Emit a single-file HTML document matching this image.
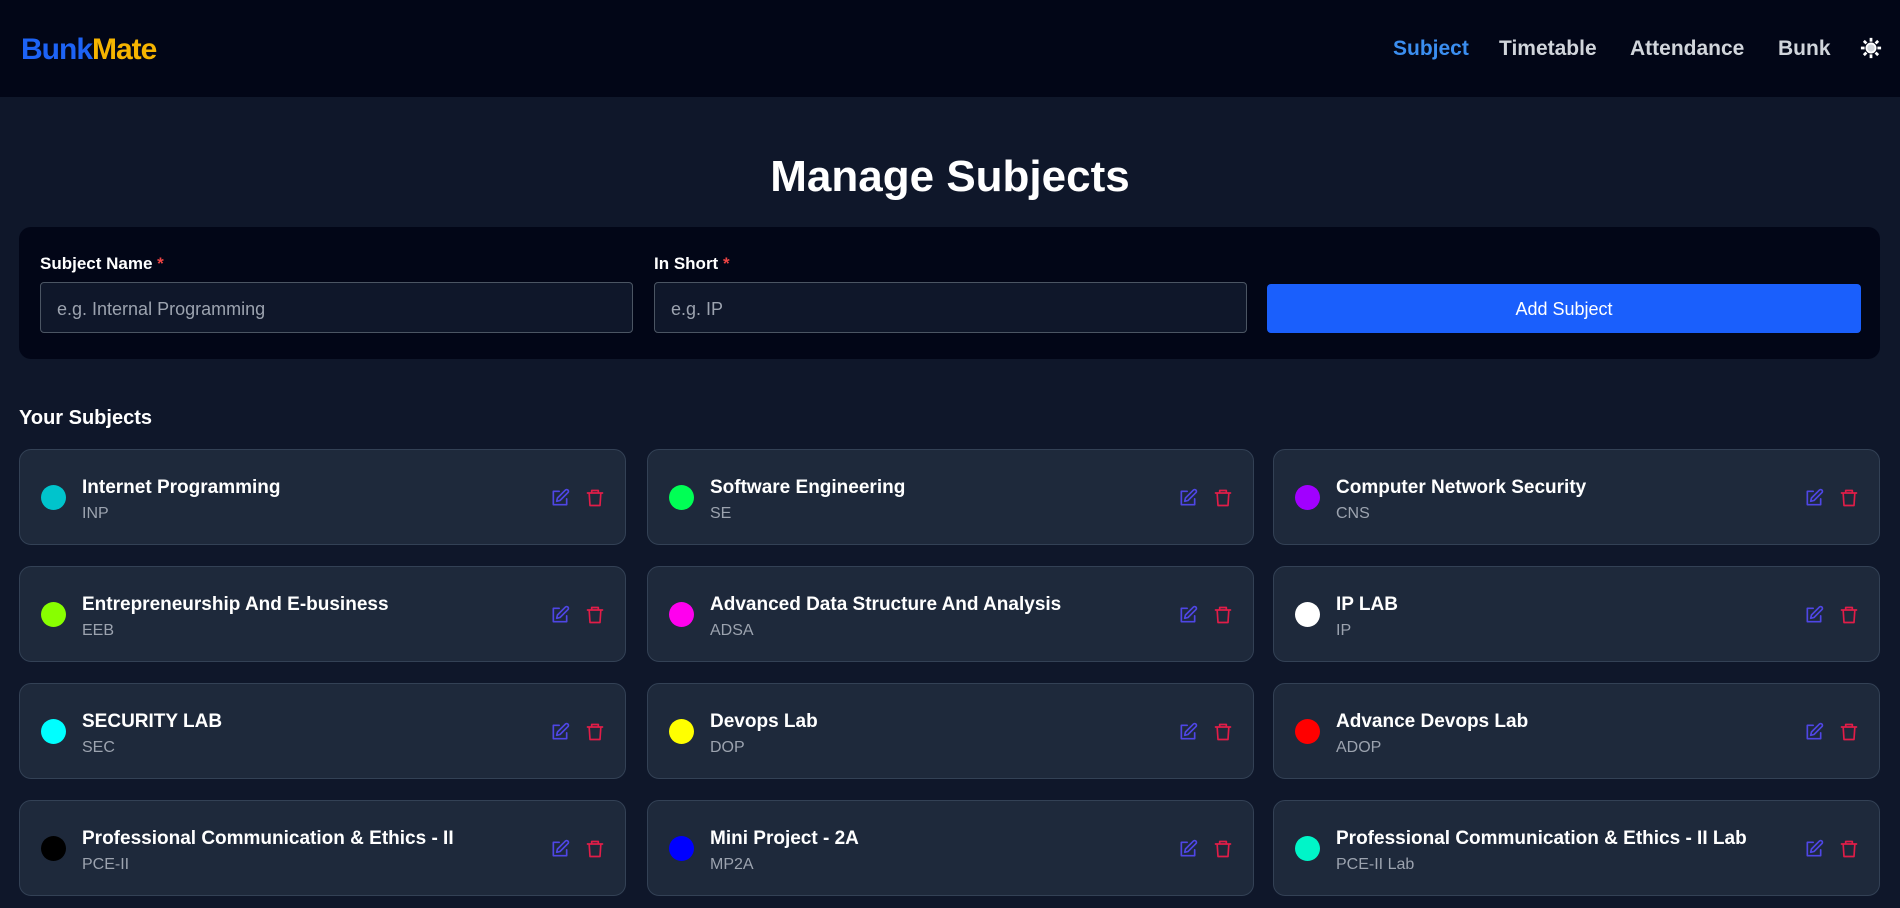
<!DOCTYPE html>
<html><head><meta charset="utf-8"><style>
*{box-sizing:border-box;margin:0;padding:0}
body{width:1900px;height:908px;overflow:hidden;background:#0f172a;font-family:"Liberation Sans",sans-serif;color:#fff}
.nav{height:97px;background:#020617;position:relative}
.logo{position:absolute;left:21px;top:33px;font-size:30px;font-weight:bold;letter-spacing:-1px}
.logo .b{color:#1d63f5}.logo .m{color:#f5b400}
.links{position:absolute;top:37px;font-size:21px;font-weight:bold;color:#d1d5db}
.links span{position:absolute;white-space:nowrap}
h1{position:absolute;top:152px;width:100%;text-align:center;font-size:44px;font-weight:bold}
.panel{position:absolute;left:19px;top:227px;width:1861px;height:132px;background:#020617;border-radius:12px}
.lbl{position:absolute;top:254px;font-size:17px;font-weight:bold}
.lbl i{color:#ef4444;font-style:normal}
.inp{position:absolute;top:282px;height:51px;border:1px solid #4b5563;border-radius:4px;background:#0f172a;color:#9ca3af;font-size:18px;padding:16px 0 0 16px}
.btn{position:absolute;left:1267px;top:284px;width:594px;height:49px;background:#1a5ffc;border-radius:4px;text-align:center;font-size:18px;line-height:51px}
.ys{position:absolute;left:19px;top:407px;font-size:20px;font-weight:bold}
.card{position:absolute;width:607px;height:96px;background:#1e293b;border:1px solid #334155;border-radius:12px}
.dot{position:absolute;left:21px;top:35px;width:25px;height:25px;border-radius:50%}
.t{position:absolute;left:62px;top:27px;font-size:19px;font-weight:bold;white-space:nowrap}
.s{position:absolute;left:62px;top:55px;font-size:16px;color:#9ca3af}
.ic{position:absolute;top:38px}
</style></head><body>
<div class="nav">
<div class="logo"><span class="b">Bunk</span><span class="m">Mate</span></div>
<div class="links">
<span style="left:1393px;color:#3b8ef0">Subject</span>
<span style="left:1499px">Timetable</span>
<span style="left:1630px">Attendance</span>
<span style="left:1778px">Bunk</span>
</div>
<svg style="position:absolute;left:1860px;top:37px" width="22" height="22" viewBox="0 0 24 24"><circle cx="12" cy="12" r="5" fill="#d1d5db" stroke="#fff" stroke-width="2"/><g stroke="#fff" stroke-width="3"><path d="M12 1v4M12 19v4M1 12h4M19 12h4M4.2 4.2l2.8 2.8M17 17l2.8 2.8M4.2 19.8L7 17M17 7l2.8-2.8"/></g></svg>
</div>
<h1>Manage Subjects</h1>
<div class="panel"></div>
<div class="lbl" style="left:40px">Subject Name <i>*</i></div>
<div class="lbl" style="left:654px">In Short <i>*</i></div>
<div class="inp" style="left:40px;width:593px">e.g. Internal Programming</div>
<div class="inp" style="left:654px;width:593px">e.g. IP</div>
<div class="btn">Add Subject</div>
<div class="ys">Your Subjects</div>
<div id="cards"></div>
<script>
var d=[["Internet Programming","INP","#00c4cc"],["Software Engineering","SE","#00ff55"],["Computer Network Security","CNS","#a100ff"],
["Entrepreneurship And E-business","EEB","#88ff00"],["Advanced Data Structure And Analysis","ADSA","#ff00ee"],["IP LAB","IP","#ffffff"],
["SECURITY LAB","SEC","#00ffff"],["Devops Lab","DOP","#ffff00"],["Advance Devops Lab","ADOP","#ff0000"],
["Professional Communication &amp; Ethics - II","PCE-II","#000000"],["Mini Project - 2A","MP2A","#0000ff"],["Professional Communication &amp; Ethics - II Lab","PCE-II Lab","#00f5c8"]];
var xs=[19,647,1273],h="";
var ed='<svg class="ic" style="left:530px" width="20" height="20" viewBox="0 0 24 24" fill="none" stroke="#4f46e5" stroke-width="2" stroke-linecap="round" stroke-linejoin="round"><path d="M11 4H4v16h16v-7"/><path d="M18.5 2.5a2.1 2.1 0 013 3L12 15l-4 1 1-4z"/></svg>';
var tr='<svg class="ic" style="left:565px" width="20" height="20" viewBox="0 0 24 24" fill="none" stroke="#e11d48" stroke-width="2" stroke-linecap="round" stroke-linejoin="round"><path d="M3 6h18M8 6V3h8v3M5 6l1 15h12l1-15"/></svg>';
d.forEach(function(c,i){var x=xs[i%3],y=449+117*Math.floor(i/3);
h+='<div class="card" style="left:'+x+'px;top:'+y+'px"><div class="dot" style="background:'+c[2]+'"></div><div class="t">'+c[0]+'</div><div class="s">'+c[1]+'</div>'+ed+tr+'</div>';});
document.getElementById("cards").innerHTML=h;
</script>
</body></html>
